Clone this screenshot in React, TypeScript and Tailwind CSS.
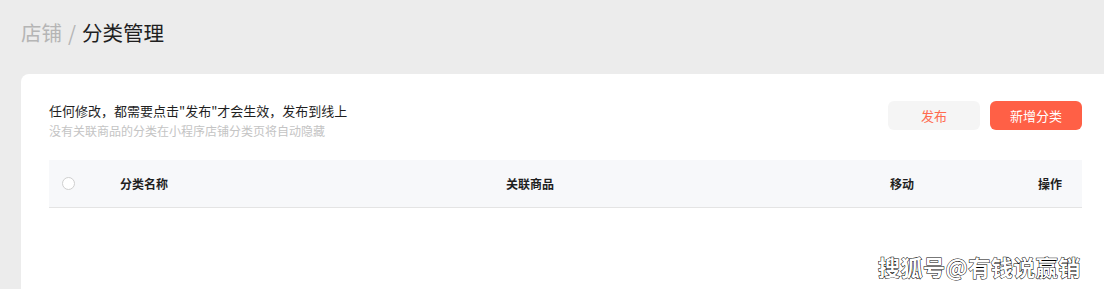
import React from 'react';

const font = { fontFamily: '"Noto Sans CJK SC", "Noto Sans", sans-serif' };

const columns = [
  { label: '分类名称', className: 'w-[386px]' },
  { label: '关联商品', className: 'w-[384px]' },
  { label: '移动', className: 'flex-1' },
  { label: '操作', className: 'w-[44px]' },
];

export default function App() {
  return (
    <div className="h-[289px] w-[1104px] overflow-hidden bg-[#ececec] relative" style={font}>
      <div className="pl-[21px] pt-[18px] h-[74px] text-[20.5px] leading-[28px]">
        <span className="text-[#b5b5b5]">店铺</span>
        <span className="text-[#b5b5b5] mx-[6px]">/</span>
        <span className="text-[#1f1f1f]">分类管理</span>
      </div>

      <div className="ml-[21px] bg-white rounded-tl-[8px] h-[215px] pl-[28px] pr-[22px] pt-[27px]">
        <div className="flex items-start justify-between">
          <div>
            <p className="text-[13px] leading-[20px] text-[#1f1f1f]">
              任何修改，都需要点击"发布"才会生效，发布到线上
            </p>
            <p className="text-[12px] leading-[18px] text-[#c4c4c4] mt-[1px]">
              没有关联商品的分类在小程序店铺分类页将自动隐藏
            </p>
          </div>
          <div className="flex gap-[10px]">
            <button className="w-[92px] h-[29px] rounded-[6px] bg-[#f5f5f5] text-[13px] text-[#ff6b4f]">
              发布
            </button>
            <button className="w-[92px] h-[29px] rounded-[6px] bg-[#ff6046] text-[13px] text-white">
              新增分类
            </button>
          </div>
        </div>

        <div className="mt-[20px] h-[48px] bg-[#f7f8fa] border-b border-[#e4e4e4] flex items-center">
          <div className="w-[71px] pl-[13px]">
            <span className="block w-[13px] h-[13px] rounded-full border border-[#cfcfcf] bg-white" />
          </div>
          {columns.map((c) => (
            <div key={c.label} className={`${c.className} text-[12px] font-bold text-[#1f1f1f]`}>
              {c.label}
            </div>
          ))}
        </div>
      </div>

      <div
        className="absolute left-[878px] top-[250px] text-[22px] font-bold text-white tracking-[0.5px]"
        style={{ WebkitTextStroke: '1px #000', paintOrder: 'stroke fill' }}
      >
        搜狐号@有钱说赢销
      </div>
    </div>
  );
}
